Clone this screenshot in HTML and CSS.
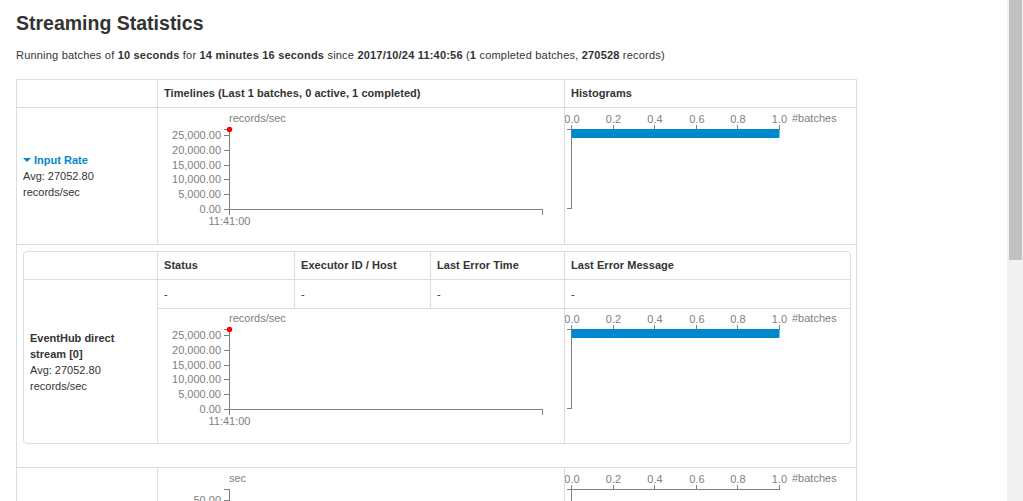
FILE: index.html
```html
<!DOCTYPE html>
<html lang="en">
<head>
    <meta charset="UTF-8">
    <meta name="viewport" content="width=device-width, initial-scale=1.0">
    <title>Streaming Statistics</title>
    <link rel="stylesheet" href="styles.css">
</head>
<body>

<div class="page">
    <h3 class="page-title">Streaming Statistics</h3>
    <p class="summary">Running batches of <strong>10 seconds</strong> for <strong>14 minutes 16 seconds</strong> since <strong>2017/10/24 11:40:56</strong> (<strong>1</strong> completed batches, <strong>270528</strong> records)</p>

    <table class="stat-table">
        <thead>
            <tr>
                <th class="first col-name"></th>
                <th class="col-timeline">Timelines (Last 1 batches, 0 active, 1 completed)</th>
                <th class="col-hist">Histograms</th>
            </tr>
        </thead>
        <tbody>
            <!-- Input rate -->
            <tr>
                <td class="first metric">
                    <div><a class="metric-link" href="#"><span class="arrow-open"></span> Input Rate</a></div>
                    <div>Avg: 27052.80</div>
                    <div>records/sec</div>
                </td>
                <td class="chart">
                    <svg class="graph" width="406" height="134">
                        <text class="unit" x="71" y="13">records/sec</text>
                        <g class="axis">
                            <path d="M65.5,20.5H71.5V100.5H65.5"/>
                            <line x1="65.5" y1="26.5" x2="71.5" y2="26.5"/>
                            <line x1="65.5" y1="41.5" x2="71.5" y2="41.5"/>
                            <line x1="65.5" y1="56.5" x2="71.5" y2="56.5"/>
                            <line x1="65.5" y1="70.5" x2="71.5" y2="70.5"/>
                            <line x1="65.5" y1="85.5" x2="71.5" y2="85.5"/>
                            <text x="63" y="26.5" dy=".32em" text-anchor="end">25,000.00</text>
                            <text x="63" y="41.5" dy=".32em" text-anchor="end">20,000.00</text>
                            <text x="63" y="56.5" dy=".32em" text-anchor="end">15,000.00</text>
                            <text x="63" y="70.5" dy=".32em" text-anchor="end">10,000.00</text>
                            <text x="63" y="85.5" dy=".32em" text-anchor="end">5,000.00</text>
                            <text x="63" y="100.5" dy=".32em" text-anchor="end">0.00</text>
                            <path d="M71.5,105.5V100.5H384.5V105.5"/>
                            <text x="71.5" y="115.5" text-anchor="middle">11:41:00</text>
                        </g>
                        <circle class="point" cx="71.5" cy="20.5" r="2.75"/>
                    </svg>
                </td>
                <td class="chart">
                    <svg class="graph" width="280" height="134">
                        <g class="axis">
                            <path d="M6.5,15.5V20.5H214.5V15.5"/>
                            <line x1="48.5" y1="15.5" x2="48.5" y2="20.5"/>
                            <line x1="89.5" y1="15.5" x2="89.5" y2="20.5"/>
                            <line x1="131.5" y1="15.5" x2="131.5" y2="20.5"/>
                            <line x1="172.5" y1="15.5" x2="172.5" y2="20.5"/>
                            <text x="7" y="13.5" text-anchor="middle">0.0</text>
                            <text x="48.5" y="13.5" text-anchor="middle">0.2</text>
                            <text x="90" y="13.5" text-anchor="middle">0.4</text>
                            <text x="132" y="13.5" text-anchor="middle">0.6</text>
                            <text x="173" y="13.5" text-anchor="middle">0.8</text>
                            <text x="214.5" y="13.5" text-anchor="middle">1.0</text>
                            <text x="227" y="13">#batches</text>
                            <path d="M2,20.5H6.5V99.5H2"/>
                        </g>
                        <rect class="bar" x="6.5" y="20" width="208" height="9"/>
                    </svg>
                </td>
            </tr>

            <!-- Receivers -->
            <tr>
                <td class="first nested-cell" colspan="3">
                    <table class="receiver-table">
                        <thead>
                            <tr>
                                <th class="first r-name"></th>
                                <th class="r-status">Status</th>
                                <th class="r-exec">Executor ID / Host</th>
                                <th class="r-time">Last Error Time</th>
                                <th class="r-msg">Last Error Message</th>
                            </tr>
                        </thead>
                        <tbody>
                            <tr>
                                <td class="first metric" rowspan="2">
                                    <div class="receiver-name">EventHub direct stream [0]</div>
                                    <div>Avg: 27052.80</div>
                                    <div>records/sec</div>
                                </td>
                                <td>-</td>
                                <td>-</td>
                                <td>-</td>
                                <td>-</td>
                            </tr>
                            <tr>
                                <td class="chart flush" colspan="3">
                                    <svg class="graph" width="406" height="134">
                                        <text class="unit" x="71" y="13">records/sec</text>
                                        <g class="axis">
                                            <path d="M65.5,20.5H71.5V100.5H65.5"/>
                                            <line x1="65.5" y1="26.5" x2="71.5" y2="26.5"/>
                                            <line x1="65.5" y1="41.5" x2="71.5" y2="41.5"/>
                                            <line x1="65.5" y1="56.5" x2="71.5" y2="56.5"/>
                                            <line x1="65.5" y1="70.5" x2="71.5" y2="70.5"/>
                                            <line x1="65.5" y1="85.5" x2="71.5" y2="85.5"/>
                                            <text x="63" y="26.5" dy=".32em" text-anchor="end">25,000.00</text>
                                            <text x="63" y="41.5" dy=".32em" text-anchor="end">20,000.00</text>
                                            <text x="63" y="56.5" dy=".32em" text-anchor="end">15,000.00</text>
                                            <text x="63" y="70.5" dy=".32em" text-anchor="end">10,000.00</text>
                                            <text x="63" y="85.5" dy=".32em" text-anchor="end">5,000.00</text>
                                            <text x="63" y="100.5" dy=".32em" text-anchor="end">0.00</text>
                                            <path d="M71.5,105.5V100.5H384.5V105.5"/>
                                            <text x="71.5" y="115.5" text-anchor="middle">11:41:00</text>
                                        </g>
                                        <circle class="point" cx="71.5" cy="20.5" r="2.75"/>
                                    </svg>
                                </td>
                                <td class="chart flush">
                                    <svg class="graph" width="280" height="134">
                                        <g class="axis">
                                            <path d="M6.5,15.5V20.5H214.5V15.5"/>
                                            <line x1="48.5" y1="15.5" x2="48.5" y2="20.5"/>
                                            <line x1="89.5" y1="15.5" x2="89.5" y2="20.5"/>
                                            <line x1="131.5" y1="15.5" x2="131.5" y2="20.5"/>
                                            <line x1="172.5" y1="15.5" x2="172.5" y2="20.5"/>
                                            <text x="7" y="13.5" text-anchor="middle">0.0</text>
                                            <text x="48.5" y="13.5" text-anchor="middle">0.2</text>
                                            <text x="90" y="13.5" text-anchor="middle">0.4</text>
                                            <text x="132" y="13.5" text-anchor="middle">0.6</text>
                                            <text x="173" y="13.5" text-anchor="middle">0.8</text>
                                            <text x="214.5" y="13.5" text-anchor="middle">1.0</text>
                                            <text x="227" y="13">#batches</text>
                                            <path d="M2,20.5H6.5V99.5H2"/>
                                        </g>
                                        <rect class="bar" x="6.5" y="20" width="208" height="9"/>
                                    </svg>
                                </td>
                            </tr>
                        </tbody>
                    </table>
                </td>
            </tr>

            <!-- Scheduling delay -->
            <tr>
                <td class="first metric">
                    <div><strong>Scheduling Delay</strong></div>
                    <div>Avg: 49 ms</div>
                </td>
                <td class="chart">
                    <svg class="graph" width="406" height="134">
                        <text class="unit" x="71" y="13">sec</text>
                        <g class="axis">
                            <path d="M65.5,20.5H71.5V100.5H65.5"/>
                            <line x1="65.5" y1="31.5" x2="71.5" y2="31.5"/>
                            <line x1="65.5" y1="45.5" x2="71.5" y2="45.5"/>
                            <line x1="65.5" y1="59.5" x2="71.5" y2="59.5"/>
                            <line x1="65.5" y1="72.5" x2="71.5" y2="72.5"/>
                            <line x1="65.5" y1="86.5" x2="71.5" y2="86.5"/>
                            <text x="63" y="31.5" dy=".32em" text-anchor="end">50.00</text>
                            <text x="63" y="45.5" dy=".32em" text-anchor="end">40.00</text>
                            <text x="63" y="59.5" dy=".32em" text-anchor="end">30.00</text>
                            <text x="63" y="72.5" dy=".32em" text-anchor="end">20.00</text>
                            <text x="63" y="86.5" dy=".32em" text-anchor="end">10.00</text>
                            <text x="63" y="100.5" dy=".32em" text-anchor="end">0.00</text>
                            <path d="M71.5,105.5V100.5H384.5V105.5"/>
                            <text x="71.5" y="115.5" text-anchor="middle">11:41:00</text>
                        </g>
                        <circle class="point" cx="71.5" cy="64.5" r="2.75"/>
                    </svg>
                </td>
                <td class="chart">
                    <svg class="graph" width="280" height="134">
                        <g class="axis">
                            <path d="M6.5,15.5V20.5H214.5V15.5"/>
                            <line x1="48.5" y1="15.5" x2="48.5" y2="20.5"/>
                            <line x1="89.5" y1="15.5" x2="89.5" y2="20.5"/>
                            <line x1="131.5" y1="15.5" x2="131.5" y2="20.5"/>
                            <line x1="172.5" y1="15.5" x2="172.5" y2="20.5"/>
                            <text x="7" y="13.5" text-anchor="middle">0.0</text>
                            <text x="48.5" y="13.5" text-anchor="middle">0.2</text>
                            <text x="90" y="13.5" text-anchor="middle">0.4</text>
                            <text x="132" y="13.5" text-anchor="middle">0.6</text>
                            <text x="173" y="13.5" text-anchor="middle">0.8</text>
                            <text x="214.5" y="13.5" text-anchor="middle">1.0</text>
                            <text x="227" y="13">#batches</text>
                            <path d="M2,20.5H6.5V99.5H2"/>
                        </g>
                        <rect class="bar" x="6.5" y="60" width="208" height="9"/>
                    </svg>
                </td>
            </tr>

            <!-- Processing time -->
            <tr>
                <td class="first metric">
                    <div><strong>Processing Time</strong></div>
                    <div>Avg: 5 seconds 372 ms</div>
                </td>
                <td class="chart">
                    <svg class="graph" width="406" height="134">
                        <text class="unit" x="71" y="13">sec</text>
                        <g class="axis">
                            <path d="M65.5,20.5H71.5V100.5H65.5"/>
                            <line x1="65.5" y1="26.5" x2="71.5" y2="26.5"/>
                            <line x1="65.5" y1="54.5" x2="71.5" y2="54.5"/>
                            <line x1="65.5" y1="79.5" x2="71.5" y2="79.5"/>
                            <text x="63" y="26.5" dy=".32em" text-anchor="end">6.00</text>
                            <text x="63" y="54.5" dy=".32em" text-anchor="end">4.00</text>
                            <text x="63" y="79.5" dy=".32em" text-anchor="end">2.00</text>
                            <text x="63" y="100.5" dy=".32em" text-anchor="end">0.00</text>
                            <path d="M71.5,105.5V100.5H384.5V105.5"/>
                            <text x="71.5" y="115.5" text-anchor="middle">11:41:00</text>
                        </g>
                        <circle class="point" cx="71.5" cy="28.5" r="2.75"/>
                    </svg>
                </td>
                <td class="chart">
                    <svg class="graph" width="280" height="134">
                        <g class="axis">
                            <path d="M6.5,15.5V20.5H214.5V15.5"/>
                            <line x1="48.5" y1="15.5" x2="48.5" y2="20.5"/>
                            <line x1="89.5" y1="15.5" x2="89.5" y2="20.5"/>
                            <line x1="131.5" y1="15.5" x2="131.5" y2="20.5"/>
                            <line x1="172.5" y1="15.5" x2="172.5" y2="20.5"/>
                            <text x="7" y="13.5" text-anchor="middle">0.0</text>
                            <text x="48.5" y="13.5" text-anchor="middle">0.2</text>
                            <text x="90" y="13.5" text-anchor="middle">0.4</text>
                            <text x="132" y="13.5" text-anchor="middle">0.6</text>
                            <text x="173" y="13.5" text-anchor="middle">0.8</text>
                            <text x="214.5" y="13.5" text-anchor="middle">1.0</text>
                            <text x="227" y="13">#batches</text>
                            <path d="M2,20.5H6.5V99.5H2"/>
                        </g>
                        <rect class="bar" x="6.5" y="24" width="208" height="9"/>
                    </svg>
                </td>
            </tr>

            <!-- Total delay -->
            <tr>
                <td class="first metric">
                    <div><strong>Total Delay</strong></div>
                    <div>Avg: 5 seconds 421 ms</div>
                </td>
                <td class="chart">
                    <svg class="graph" width="406" height="134">
                        <text class="unit" x="71" y="13">sec</text>
                        <g class="axis">
                            <path d="M65.5,20.5H71.5V100.5H65.5"/>
                            <line x1="65.5" y1="26.5" x2="71.5" y2="26.5"/>
                            <line x1="65.5" y1="54.5" x2="71.5" y2="54.5"/>
                            <line x1="65.5" y1="79.5" x2="71.5" y2="79.5"/>
                            <text x="63" y="26.5" dy=".32em" text-anchor="end">6.00</text>
                            <text x="63" y="54.5" dy=".32em" text-anchor="end">4.00</text>
                            <text x="63" y="79.5" dy=".32em" text-anchor="end">2.00</text>
                            <text x="63" y="100.5" dy=".32em" text-anchor="end">0.00</text>
                            <path d="M71.5,105.5V100.5H384.5V105.5"/>
                            <text x="71.5" y="115.5" text-anchor="middle">11:41:00</text>
                        </g>
                        <circle class="point" cx="71.5" cy="27.5" r="2.75"/>
                    </svg>
                </td>
                <td class="chart">
                    <svg class="graph" width="280" height="134">
                        <g class="axis">
                            <path d="M6.5,15.5V20.5H214.5V15.5"/>
                            <line x1="48.5" y1="15.5" x2="48.5" y2="20.5"/>
                            <line x1="89.5" y1="15.5" x2="89.5" y2="20.5"/>
                            <line x1="131.5" y1="15.5" x2="131.5" y2="20.5"/>
                            <line x1="172.5" y1="15.5" x2="172.5" y2="20.5"/>
                            <text x="7" y="13.5" text-anchor="middle">0.0</text>
                            <text x="48.5" y="13.5" text-anchor="middle">0.2</text>
                            <text x="90" y="13.5" text-anchor="middle">0.4</text>
                            <text x="132" y="13.5" text-anchor="middle">0.6</text>
                            <text x="173" y="13.5" text-anchor="middle">0.8</text>
                            <text x="214.5" y="13.5" text-anchor="middle">1.0</text>
                            <text x="227" y="13">#batches</text>
                            <path d="M2,20.5H6.5V99.5H2"/>
                        </g>
                        <rect class="bar" x="6.5" y="22" width="208" height="9"/>
                    </svg>
                </td>
            </tr>
        </tbody>
    </table>
</div>

<!-- window scrollbar -->
<div class="scrollbar"><div class="scrollbar-thumb"></div></div>

</body>
</html>
```

FILE: styles.css
```css
/* General styles */
* {
    box-sizing: border-box;
}
html, body {
    margin: 0;
    padding: 0;
}
body {
    font-family: "Liberation Sans", Arial, sans-serif;
    font-size: 11px;
    line-height: 16px;
    color: #333;
    background: #fff;
}

/* Window scrollbar drawn over the right edge */
.scrollbar {
    position: fixed;
    top: 0;
    right: 0;
    bottom: 0;
    width: 16px;
    background: #f1f1f1;
}
.scrollbar-thumb {
    width: 13px;
    height: 260px;
    margin-left: 2px;
    background: #c1c1c1;
}

.page {
    padding: 0 16px 86px 16px;
}
.page-title {
    margin: 11px 0 0 0;
    font-size: 19.5px;
    line-height: 24px;
    font-weight: bold;
    color: #333;
}
.summary {
    margin: 12px 0 16px 0;
    letter-spacing: 0.2px;
}
strong {
    font-weight: bold;
}

/* Bordered tables */
.stat-table,
.receiver-table {
    border-collapse: separate;
    border-spacing: 0;
    table-layout: fixed;
    border: 1px solid #ddd;
}
.stat-table {
    width: 841px;
}
.receiver-table {
    width: 828px;
    border-radius: 4px;
}
.stat-table th,
.stat-table td {
    border-top: 1px solid #ddd;
    border-left: 1px solid #ddd;
    padding: 6px;
    text-align: left;
    vertical-align: middle;
}
.stat-table th {
    line-height: 15px;
    font-weight: bold;
    letter-spacing: 0.05px;
}
.stat-table thead th {
    border-top: 0;
}
.stat-table .first {
    border-left: 0;
}

.col-name { width: 140px; }
.col-timeline { width: 407px; }
.col-hist { width: 292px; }

.r-name { width: 133px; }
.r-status { width: 137px; }
.r-exec { width: 136px; }
.r-time { width: 134px; }
.r-msg { width: 286px; }

.stat-table td.nested-cell {
    padding: 6px 5px 23px 6px;
}
.stat-table td.chart {
    padding: 1px 0;
}
.stat-table td.chart.flush {
    padding: 0;
}
.graph {
    display: block;
}

/* Metric labels */
.metric-link {
    color: #0088cc;
    font-weight: bold;
    text-decoration: none;
}
.arrow-open {
    display: inline-block;
    width: 0;
    height: 0;
    border-left: 4px solid transparent;
    border-right: 4px solid transparent;
    border-top: 4px solid #0088cc;
    margin-bottom: 2px;
}
.receiver-name {
    font-weight: bold;
}

/* Charts */
.axis path,
.axis line {
    fill: none;
    stroke: gray;
    shape-rendering: crispEdges;
}
.axis text,
.unit {
    fill: gray;
    font-family: "Liberation Sans", Arial, sans-serif;
    font-size: 11px;
}
.point {
    fill: red;
}
.bar {
    fill: #0088cc;
}
```
